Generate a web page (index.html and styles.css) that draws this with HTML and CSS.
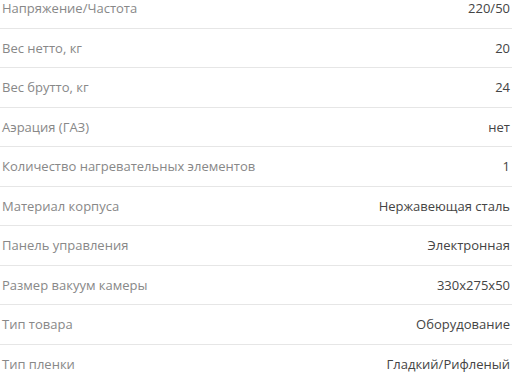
FILE: index.html
```html
<!DOCTYPE html>
<html lang="ru">
<head>
<meta charset="utf-8">
<link rel="stylesheet" href="styles.css">
</head>
<body>
<div class="specs">
  <div class="row"><span class="label">Напряжение/Частота</span><span class="value">220/50</span></div>
  <div class="row"><span class="label">Вес нетто, кг</span><span class="value">20</span></div>
  <div class="row"><span class="label">Вес брутто, кг</span><span class="value">24</span></div>
  <div class="row"><span class="label">Аэрация (ГАЗ)</span><span class="value">нет</span></div>
  <div class="row"><span class="label">Количество нагревательных элементов</span><span class="value">1</span></div>
  <div class="row"><span class="label">Материал корпуса</span><span class="value">Нержавеющая сталь</span></div>
  <div class="row"><span class="label">Панель управления</span><span class="value">Электронная</span></div>
  <div class="row"><span class="label">Размер вакуум камеры</span><span class="value">330x275x50</span></div>
  <div class="row"><span class="label">Тип товара</span><span class="value">Оборудование</span></div>
  <div class="row"><span class="label">Тип пленки</span><span class="value">Гладкий/Рифленый</span></div>
</div>
</body>
</html>
```
FILE: styles.css
```css
html, body {
  margin: 0;
  padding: 0;
  background: #fff;
}
body {
  font-family: "Open Sans", "Liberation Sans", sans-serif;
  font-size: 13px;
  overflow: hidden;
}
.specs {
  width: 512px;
  margin-top: -11px;
}
.row {
  display: flex;
  justify-content: space-between;
  align-items: center;
  height: 38.5px;
  border-bottom: 1px solid #e6e6e6;
  padding: 0 2px 0 2px;
}
.label {
  color: #888;
}
.value {
  color: #444;
}
```
